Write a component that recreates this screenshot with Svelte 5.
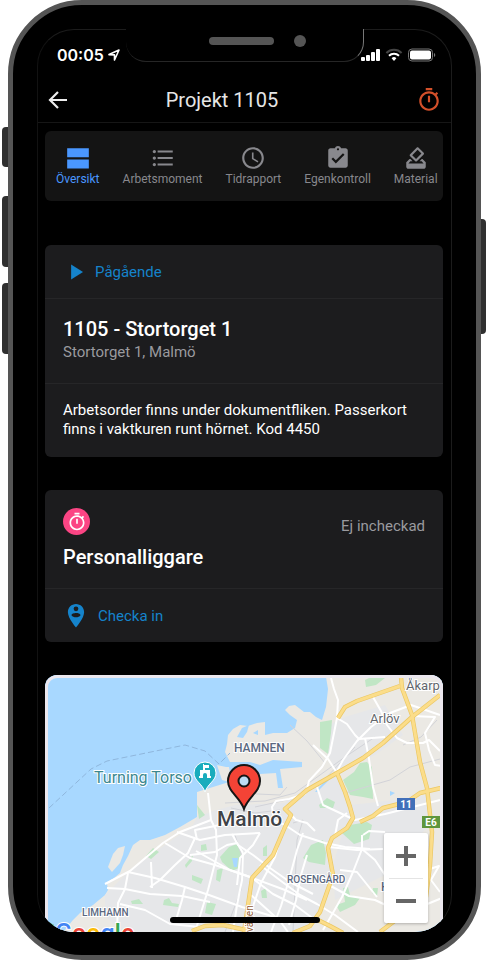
<script>
  let activeTab = $state('Översikt');

  const TIMER =
    'M15 1H9v2h6V1zm-4 13h2V8h-2v6zm8.03-6.61l1.42-1.42c-.43-.51-.9-.99-1.41-1.41l-1.42 1.42C16.07 4.74 14.12 4 12 4c-4.97 0-9 4.03-9 9s4.02 9 9 9 9-4.03 9-9c0-2.12-.74-4.07-1.97-5.61zM12 20c-3.87 0-7-3.13-7-7s3.13-7 7-7 7 3.13 7 7-3.13 7-7 7z';

  const tabs = [
    { label: 'Översikt', path: 'M2 3h20v8.4H2zM2 13.4h20v8.4H2z' },
    {
      label: 'Arbetsmoment',
      path: 'M4 10.5c-.83 0-1.5.67-1.5 1.5s.67 1.5 1.5 1.5 1.5-.67 1.5-1.5-.67-1.5-1.5-1.5zm0-6c-.83 0-1.5.67-1.5 1.5S3.17 7.5 4 7.5 5.5 6.83 5.5 6 4.83 4.5 4 4.5zm0 12c-.83 0-1.5.68-1.5 1.5s.68 1.5 1.5 1.5 1.5-.68 1.5-1.5-.67-1.5-1.5-1.5zM7 19h14v-2H7v2zm0-6h14v-2H7v2zm0-8v2h14V5H7z'
    },
    {
      label: 'Tidrapport',
      path: 'M11.99 2C6.47 2 2 6.48 2 12s4.47 10 9.99 10C17.52 22 22 17.52 22 12S17.52 2 11.99 2zM12 20c-4.42 0-8-3.58-8-8s3.58-8 8-8 8 3.58 8 8-3.58 8-8 8zm.5-13H11v6l5.25 3.15.75-1.23-4.5-2.67z'
    },
    {
      label: 'Egenkontroll',
      path: 'M19 3h-4.18C14.4 1.84 13.3 1 12 1c-1.3 0-2.4.84-2.82 2H5c-1.1 0-2 .9-2 2v14c0 1.1.9 2 2 2h14c1.1 0 2-.9 2-2V5c0-1.1-.9-2-2-2zm-7 0c.55 0 1 .45 1 1s-.45 1-1 1-1-.45-1-1 .45-1 1-1zm-2 14l-4-4 1.41-1.41L10 14.17l6.59-6.59L18 9l-8 8z'
    },
    {
      label: 'Material',
      path: 'M18 13h-.68l-2 2h1.91L19 17H5l1.78-2h2.05l-2-2H6l-3 3v4c0 1.1.89 2 1.99 2H19c1.1 0 2-.89 2-2v-4l-3-3zm-1-5.05l-4.95 4.95-3.54-3.54 4.95-4.95L17 7.95zm-4.24-5.66L6.39 8.66c-.39.39-.39 1.02 0 1.41l4.95 4.95c.39.39 1.02.39 1.41 0l6.36-6.36c.39-.39.39-1.02 0-1.41L14.16 2.3c-.38-.4-1.01-.4-1.4-.01z'
    }
  ];

  // Map shapes, in the units of the map's viewBox
  const land = [
    'M281 2L283 14 281 32 277 45 271 42 265 37 259 37 250 30 244 31 240 35 245 40 252 45 250 53 242 58 228 58 220 60 220 47 212 48 203 51 195 50 188 54 183 60 182 69 180 77 185 87 205 87 215 90 228 85 257 87 257 92 235 94 238 113 233 113 231 98 215 99 205 101 186 103 184 92 181 92 172 90 177 105 184 107 152 117 152 142 135 152 120 160 105 165 95 165 88 170 83 181 78 190 75 198 69 203 62 208 63 215 60 220 48 230 35 238 28 245 18 257H398V0z',
    'M63 192L68 179 73 173 80 171 78 180 75 188 67 197z',
    'M62 209L67 204 69 208 64 212z'
  ];
  const urban = [
    'M152 142L168 136 190 130 240 128 262 112 292 98 306 130 304 153 287 164 288 200 275 238 262 257H75L60 240 60 220 84 196 120 170 148 150z',
    'M284 50L300 42 340 30 358 60 330 80 292 98 283 80z',
    'M306 130L350 125 383 120 384 150 340 200 290 225 288 190z'
  ];
  const parks = [
    'M275 47L287 45 286 58 283 79 275 73z',
    'M298 105L309 97 315 88 322 87 327 92 328 124 318 122 305 120z',
    'M320 5L326 2 340 3 331 10 321 12z',
    'M274 130L282 123 290 127 288 133 275 133z',
    'M297 158L305 150 322 147 327 150 324 164 309 169z',
    'M258 183L266 170 278 165 281 178 280 190 264 187z',
    'M175 182L184 172 192 169 196 178 194 193 187 196 177 187z',
    'M101 181L108 173 114 177 106 184z',
    'M147 200L158 204 156 209 147 205z',
    'M162 227L171 229 167 240 160 238z',
    'M119 225L124 223 127 228 134 229 133 232 118 230z',
    'M86 226L94 224 98 229 87 229z',
    'M172 195L178 193 175 207 171 205z',
    'M156 170L161 169 162 175 156 176z',
    'M140 190L148 180 147 186 141 193z',
    'M298 213L303 212 305 220 315 223 310 230 295 237 291 230 300 227z',
    'M216 216L221 213 222 223 217 223z',
    'M218 173L222 170 222 181 218 181z',
    'M328 213L333 213 332 221 327 218z',
    'M152 130L160 140 154 144z'
  ];
  const waters = [
    'M197 53L204 50 202 57 198 63 192 62z',
    'M208 58L213 55 213 60z',
    'M187 183L193 183 192 192 189 192z',
    'M345 116L350 118 345 121z',
    'M270 117L286 99 288 101 272 117z'
  ];
  const rails = [
    'M180 128L220 126 250 118 300 82 330 62',
    'M210 132L255 122 280 104 310 72',
    'M190 118L235 120 242 112',
    'M245 50L262 66 280 88',
    'M186 133L210 138 235 135',
    'M300 118L345 105 365 92 395 84',
    'M190 160L197 182 196 215 180 257',
    'M248 148L258 145 252 165 248 257',
    'M392 45L376 62 358 70'
  ];
  const streets = [
    'M286 3L289 14 293 25 292 43 285 78 277 92 264 106 262 114',
    'M292 43L302 49 310 60 314 64 340 62',
    'M395 40L366 30 345 38 326 52 312 66 298 85 291 98',
    'M328 22L336 36 342 50 352 63 362 68 378 68 384 65 395 76',
    'M367 41L390 42 380 58 384 75 390 90 397 91',
    'M320 63L324 84 328 112 333 131',
    'M268 70L283 84 292 98',
    'M262 114L260 119 244 124 231 126 227 132 228 140',
    'M272 112L278 130 310 145 340 139 395 125',
    'M163 118L166 145 171 155 172 180 163 215 150 257',
    'M60 209L85 196 118 168 135 157 166 145',
    'M83 197L110 203 140 212 164 220 197 232 230 242',
    'M83 198L80 214 73 228 72 257',
    'M62 213L80 214 105 219 137 221 165 227',
    'M120 168L145 183 170 190 205 202 240 215 262 225',
    'M132 157L155 165 180 160 215 158',
    'M150 163L143 178 130 190 115 205 105 212',
    'M106 187L107 213',
    'M152 165L150 155 175 150 200 145',
    'M145 180L170 177 182 170 192 168 198 178',
    'M151 176L185 195 205 202',
    'M75 229L100 235 125 249 155 252',
    'M198 178L197 205 192 230 188 257',
    'M140 212L137 225 131 245',
    'M187 159L193 170 208 180 225 193 245 207 268 219',
    'M215 140L240 150 255 160 280 168 300 172 325 174',
    'M215 158L208 170 195 183 192 210',
    'M238 153L230 182 216 208 205 240 201 257',
    'M258 158L252 175 244 205 236 231 226 257',
    'M207 203L228 219 250 230 270 245',
    'M215 190L236 206 255 220 272 229 290 240 313 257',
    'M206 220L235 246 243 257',
    'M262 180L256 200 251 225 244 250',
    'M284 172L312 175 338 174',
    'M318 160L324 156 340 157',
    'M317 160L317 174 308 197 297 222 285 243 278 255',
    'M317 174L330 185 340 200',
    'M295 195L312 197 324 212 332 222',
    'M284 210L304 221 330 225 345 232',
    'M302 138L293 145 290 161',
    'M382 195L394 191 386 205 395 217',
    'M350 235L375 232 397 223',
    'M240 133L251 145 262 148 270 156'
  ];
  const highways = [
    'M293 43L300 32 312 26 355 11',
    'M356 2L357 13 367 40 375 87 382 113 387 157 385 190 381 222 360 238 335 257',
    'M395 20L367 42 338 68 318 83 292 98 262 115 240 134 246 140 240 152 228 180 207 203 203 230 199 257',
    'M292 98L300 117 305 132 308 143 302 153 287 163 283 173 288 200 275 237 265 251 248 258',
    'M396 113L375 118 362 127 338 133 328 141 315 147',
    'M273 245L285 251 298 258',
    'M147 256L160 251 178 250 205 256'
  ];
</script>

<svelte:head>
  <title>Projekt 1105</title>
</svelte:head>

{#snippet icon(path)}
  <svg class="icon" viewBox="0 0 24 24" aria-hidden="true"><path d={path} /></svg>
{/snippet}

<div class="stage">
  <div class="phone">
    <span class="side mute"></span>
    <span class="side up"></span>
    <span class="side down"></span>
    <span class="side power"></span>
    <div class="notch">
      <span class="speaker"></span>
      <span class="camera"></span>
    </div>

    <div class="screen">
      <div class="status">
        <span class="clock">00:05</span>
        <svg class="location" viewBox="0 0 12 12" aria-hidden="true">
          <path d="M1 5.6L11 1 6.5 11V5.9z" />
        </svg>
        <svg class="signals" viewBox="0 0 76 14" aria-hidden="true">
          <g fill="#fff">
            <rect x="1" y="9" width="4" height="4" rx="1" />
            <rect x="6" y="7" width="4" height="6" rx="1" />
            <rect x="11" y="4" width="4" height="9" rx="1" />
            <rect x="16" y="1" width="4" height="12" rx="1" />
            <path d="M31.6 10.200a3.400 3.400 0 0 1 4.800 0L34 13z" />
          </g>
          <path d="M26.400 5A10.800 10.800 0 0 1 41.600 5" fill="none" stroke="#444" stroke-width="2" />
          <path d="M29 7.800A7.200 7.200 0 0 1 39 7.800" fill="none" stroke="#fff" stroke-width="2" />
          <rect x="48.5" y="1" width="24" height="12" rx="3.5" fill="none" stroke="#777" />
          <rect x="50" y="2.5" width="21" height="9" rx="2" fill="#fff" />
          <path d="M74 5a2.200 2.200 0 0 1 0 4z" fill="#777" />
        </svg>
      </div>

      <header>
        <button class="back" aria-label="Tillbaka">
          <svg viewBox="0 0 20 20" aria-hidden="true"><path d="M19 10H2M10 2L2 10l8 8" /></svg>
        </button>
        <h1>Projekt 1105</h1>
        <button class="timer" aria-label="Tidtagning">{@render icon(TIMER)}</button>
      </header>

      <main>
        <nav>
          {#each tabs as tab}
            <button class:active={activeTab === tab.label} onclick={() => (activeTab = tab.label)}>
              {@render icon(tab.path)}
              <span>{tab.label}</span>
            </button>
          {/each}
        </nav>

        <section class="card">
          <button class="action state">
            {@render icon('M7.500 5v14l11-7z')}
            Pågående
          </button>
          <div class="project">
            <h2>1105 - Stortorget 1</h2>
            <p>Stortorget 1, Malmö</p>
          </div>
          <p class="note">Arbetsorder finns under dokumentfliken. Passerkort finns i vaktkuren runt hörnet. Kod 4450</p>
        </section>

        <section class="card">
          <div class="ledger">
            <div class="ledger-top">
              <span class="bubble">{@render icon(TIMER)}</span>
              <span>Ej incheckad</span>
            </div>
            <h2>Personalliggare</h2>
          </div>
          <button class="action checkin">
            {@render icon(
              'M12 1C7.8 1 4.5 4.3 4.5 8.5 4.5 14 12 22.5 12 22.5s7.5-8.5 7.5-14C19.5 4.3 16.2 1 12 1zm0 2.2a2.2 2.2 0 1 1 0 4.4 2.2 2.2 0 0 1 0-4.4zm0 10c-1.8 0-3.3-.7-4.2-2 0-1.3 2.8-2 4.2-2s4.2.7 4.2 2c-.9 1.3-2.4 2-4.2 2z'
            )}
            Checka in
          </button>
        </section>

        <section class="map">
          <svg viewBox="0 0 398 257" preserveAspectRatio="xMidYMid slice" role="img" aria-label="Karta över Malmö">
            <rect width="398" height="257" fill="#a8d8ff" />
            {#each land as d}<path {d} fill="#ebe9e4" />{/each}
            {#each urban as d}<path {d} fill="#e6e7e9" />{/each}
            {#each parks as d}<path {d} fill="#c0e6c5" />{/each}
            {#each waters as d}<path {d} fill="#a8d8ff" />{/each}
            <g class="lines">
              {#each rails as d}<path {d} stroke="#d2d3d8" stroke-width="1" />{/each}
              {#each streets as d}<path {d} stroke="#fff" stroke-width="2" />{/each}
              {#each highways as d}<path {d} stroke="#ecc863" stroke-width="4.4" />{/each}
              {#each highways as d}<path {d} stroke="#fbdd8a" stroke-width="3" />{/each}
              <path d="M4 133L46 94 62 86 140 70 160 76 174 89 185 78" stroke="#8fb6dc" stroke-dasharray="6 3" />
            </g>

            <g class="places">
              <text x="361" y="15" font-size="13">Åkarp</text>
              <text x="325" y="48" font-size="13">Arlöv</text>
              <text class="area" x="189" y="77" font-size="12">HAMNEN</text>
              <text class="area" x="242" y="208" font-size="10">ROSENGÅRD</text>
              <text class="area" x="37" y="241" font-size="10">LIMHAMN</text>
              <text class="area" x="336" y="216" font-size="12">H</text>
              <text class="poi" x="49" y="108" font-size="16">Turning Torso</text>
              <text class="road" transform="translate(208 257) rotate(-90)" font-size="10">vägen</text>
            </g>

            <g class="shields">
              <rect x="352" y="123" width="18" height="12" fill="#416fb9" />
              <text x="361" y="133">11</text>
              <rect x="377" y="141" width="18" height="12" fill="#5f963c" />
              <text x="386" y="151">E6</text>
            </g>

            <path d="M160 117C157 108 149 106 149 98a11 11 0 0 1 22 0C171 106 163 108 160 117z" fill="#19acbd" stroke="#fff" />
            <path d="M154 103v-2h1v-6h3v-6h1v1h5v3h-4v2h5v6h1v2h-4v-3a2 2 0 0 0-4 0v3z" fill="#fff" />

            <text class="city" x="172" y="151" font-size="21">Malmö</text>
            <path d="M199 134C195 122 183 117 183 106a16 16 0 0 1 32 0C215 117 203 122 199 134z" fill="#f44336" stroke="#151515" stroke-width="2" />
            <circle cx="199" cy="106" r="5.5" fill="#bcdcf5" stroke="#151515" stroke-width="2" />

            <path d="M4 247L9 250V257H4z" fill="#34a853" />
            <text class="google" x="10" y="267">
              <tspan fill="#4285f4">G</tspan><tspan fill="#ea4335">o</tspan><tspan fill="#fbbc05">o</tspan><tspan
                fill="#4285f4">g</tspan
              ><tspan fill="#34a853">l</tspan><tspan fill="#ea4335">e</tspan>
            </text>
          </svg>
          <div class="zoom">
            <button aria-label="Zooma in">
              <svg viewBox="0 0 20 20" aria-hidden="true"><path d="M0 10h20M10 0v20" /></svg>
            </button>
            <button aria-label="Zooma ut">
              <svg viewBox="0 0 20 20" aria-hidden="true"><path d="M0 10h20" /></svg>
            </button>
          </div>
        </section>
      </main>
      <span class="home"></span>
    </div>
  </div>
</div>

<style>
  :global(body) {
    background: #fff;
  }

  .stage {
    padding: 0 7px 0 8px;
    font-family: Roboto, sans-serif;
    color: #fff;
  }

  .stage * {
    box-sizing: border-box;
  }

  h1,
  h2,
  p {
    margin: 0;
  }

  button {
    padding: 0;
    border: 0;
    background: none;
    color: inherit;
    font: inherit;
    cursor: pointer;
  }

  svg {
    display: block;
    flex: none;
  }

  .icon {
    width: 26px;
    height: 26px;
    fill: currentColor;
  }

  .phone {
    position: relative;
    padding: 24px 24px 23px;
    border: 5px solid #555;
    border-radius: 74px;
    background: #000;
  }

  /* hardware buttons */
  .side {
    position: absolute;
    left: -11px;
    width: 6px;
    border-radius: 4px 0 0 4px;
    background: #303030;
  }

  .mute {
    top: 122px;
    height: 40px;
  }

  .up {
    top: 191px;
    height: 71px;
  }

  .down {
    top: 278px;
    height: 71px;
  }

  .power {
    top: 214px;
    right: -10px;
    left: auto;
    width: 5px;
    height: 115px;
    border-radius: 0 4px 4px 0;
  }

  .notch {
    position: absolute;
    z-index: 1;
    top: 24px;
    left: 50%;
    display: flex;
    justify-content: flex-end;
    gap: 20px;
    width: 238px;
    height: 33px;
    margin-left: -119px;
    padding: 6px 57px 0 0;
    border: solid #262626;
    border-width: 0 1px 1px 0;
    border-right-color: #777;
    border-radius: 0 0 20px 20px;
    background: #000;
  }

  .speaker {
    width: 65px;
    height: 8px;
    margin-top: 2px;
    border-radius: 4px;
    background: #555;
  }

  .camera {
    width: 12px;
    height: 12px;
    border-radius: 50%;
    background: #555;
  }

  .screen {
    position: relative;
    overflow: hidden;
    border: solid #1c1c1c;
    border-width: 1px 1px 0;
    border-left-color: #121212;
    border-radius: 37px;
  }

  .status {
    display: flex;
    align-items: center;
    height: 47px;
    padding: 2px 15px 0 19px;
  }

  .clock {
    font: 600 16px Inter, sans-serif;
  }

  .location {
    width: 12px;
    height: 12px;
    margin-left: 4px;
    fill: none;
    stroke: #fff;
    stroke-width: 1.6;
    stroke-linejoin: round;
  }

  .signals {
    width: 76px;
    height: 14px;
    margin-left: auto;
  }

  header {
    display: flex;
    align-items: center;
    height: 46px;
    padding: 0 9px 0 10px;
    border-bottom: 1px solid #161616;
  }

  .back svg {
    width: 20px;
    height: 20px;
    fill: none;
    stroke: #eee;
    stroke-width: 2.2;
  }

  h1 {
    flex: 1;
    padding-right: 40px;
    font-size: 20px;
    font-weight: 400;
    text-align: center;
    color: #e6e6e6;
  }

  .timer {
    color: #d4502a;
  }

  main {
    padding: 8px 8px 0 7px;
  }

  nav {
    display: flex;
    gap: 23px;
    height: 70px;
    margin-bottom: 44px;
    padding: 14px 0 0 11px;
    overflow: hidden;
    border-radius: 6px;
    background: #141414;
    color: #88888d;
  }

  nav button {
    display: flex;
    flex: none;
    flex-direction: column;
    align-items: center;
    font-size: 12px;
    line-height: 16px;
  }

  nav .active {
    color: #4a97ff;
  }

  .card {
    margin-bottom: 33px;
    border-radius: 6px;
    background: #1c1c1e;
  }

  .action {
    display: flex;
    align-items: center;
    width: 100%;
    height: 53px;
    padding-left: 18px;
    font-size: 15px;
    color: #1583cb;
  }

  .state {
    gap: 6px;
  }

  .checkin {
    gap: 9px;
  }

  h2 {
    font-size: 20px;
    font-weight: 500;
    line-height: 24px;
  }

  .project {
    padding: 18px 18px 19px;
    border: solid #262628;
    border-width: 1px 0;
    color: #9a9a9f;
  }

  .project h2 {
    color: #fff;
  }

  .project p {
    font-size: 15px;
    line-height: 23px;
  }

  .note {
    padding: 17px 18px 18px;
    font-size: 15px;
    line-height: 19px;
  }

  .ledger {
    padding: 18px 18px 19px;
    border-bottom: 1px solid #262628;
  }

  .ledger-top {
    display: flex;
    justify-content: space-between;
    align-items: flex-end;
    margin-bottom: 10px;
    font-size: 15px;
    color: #9a9a9f;
  }

  .bubble {
    display: grid;
    place-items: center;
    width: 27px;
    height: 27px;
    border-radius: 50%;
    background: #fb4584;
    color: #fff;
  }

  .bubble .icon {
    width: 20px;
    height: 20px;
  }

  .map {
    position: relative;
    overflow: hidden;
    border-radius: 12px 12px 0 0;
    background: #a8d8ff;
  }

  .map > svg {
    width: 100%;
    height: 257px;
  }

  .map::after {
    content: '';
    position: absolute;
    inset: 0;
    border: solid #ebe7ee;
    border-width: 3px 3px 0;
    border-radius: 12px 12px 0 0;
    pointer-events: none;
  }

  .lines path {
    fill: none;
    stroke-linejoin: round;
  }

  .places text,
  .city {
    fill: #62666c;
    stroke: #fff;
    stroke-width: 2px;
    paint-order: stroke;
  }

  .places .area {
    font-weight: 500;
    fill: #5b6880;
  }

  .places .poi {
    fill: #3b8890;
  }

  .city {
    font-weight: 500;
    fill: #3f4247;
  }

  .places .road {
    fill: #94603a;
  }

  .shields text {
    font-size: 10px;
    font-weight: 700;
    text-anchor: middle;
    fill: #fff;
  }

  .google {
    font-size: 25px;
    font-weight: 500;
    stroke: #fff;
    stroke-width: 2px;
    paint-order: stroke;
  }

  .zoom {
    position: absolute;
    right: 15px;
    bottom: 9px;
    z-index: 1;
    display: flex;
    flex-direction: column;
    width: 44px;
    border-radius: 2px;
    background: #fff;
    box-shadow: 0 1px 3px rgba(0, 0, 0, 0.25);
  }

  .zoom button {
    display: grid;
    place-items: center;
    height: 45px;
  }

  .zoom button + button {
    margin: 0 5px;
    border-top: 1px solid #e4e4e4;
  }

  .zoom svg {
    width: 20px;
    height: 20px;
    stroke: #666;
    stroke-width: 4;
  }

  .home {
    position: absolute;
    bottom: 9px;
    left: 50%;
    z-index: 2;
    width: 150px;
    height: 6px;
    margin-left: -75px;
    border-radius: 3px;
    background: #000;
  }
</style>
